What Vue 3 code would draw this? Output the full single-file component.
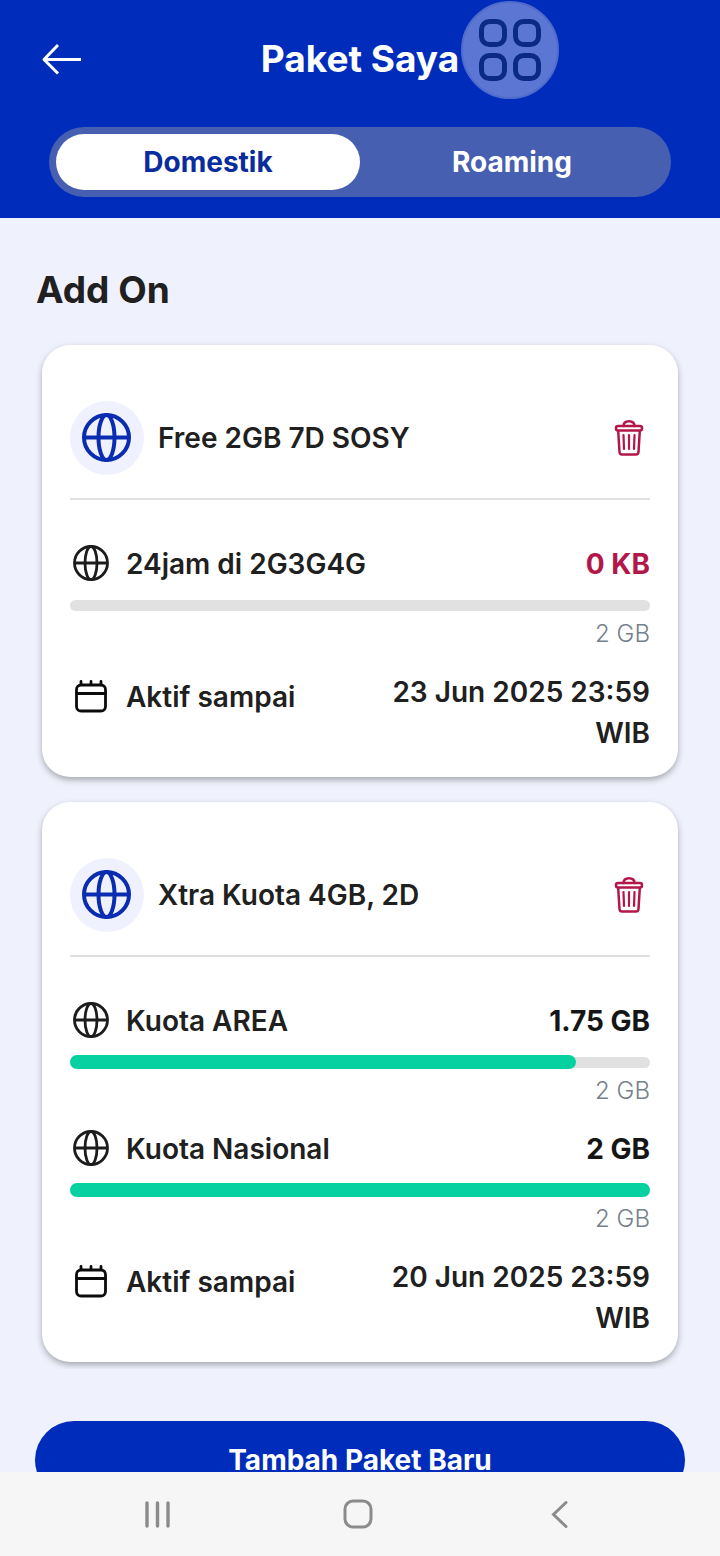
<script setup>
import { ref } from 'vue'

const tabs = ['Domestik', 'Roaming']
const activeTab = ref('Domestik')

const packages = [
  {
    name: 'Free 2GB 7D SOSY',
    quotas: [{ label: '24jam di 2G3G4G', left: '0 KB', total: '2 GB', percent: 0 }],
    until: '23 Jun 2025 23:59 WIB'
  },
  {
    name: 'Xtra Kuota 4GB, 2D',
    quotas: [
      { label: 'Kuota AREA', left: '1.75 GB', total: '2 GB', percent: 87.3 },
      { label: 'Kuota Nasional', left: '2 GB', total: '2 GB', percent: 100 }
    ],
    until: '20 Jun 2025 23:59 WIB'
  }
]
</script>

<template>
  <div class="app">
    <header class="header">
      <div class="title-bar">
        <button class="plain back" type="button" aria-label="Kembali">
          <svg width="44" height="36" viewBox="0 0 44 36" fill="none" stroke="#fff" stroke-width="3" stroke-linejoin="round">
            <path d="M20 4 6 18.500l14 14M6 18.500h37" />
          </svg>
        </button>
        <h1>Paket Saya</h1>
      </div>
      <nav class="tabs">
        <button
          v-for="tab in tabs"
          :key="tab"
          type="button"
          class="tab"
          :class="{ active: tab === activeTab }"
          :aria-pressed="tab === activeTab"
          @click="activeTab = tab"
        >{{ tab }}</button>
      </nav>
    </header>

    <button class="plain floating" type="button" aria-label="Menu pintasan">
      <svg width="64" height="64" viewBox="0 0 64 64" fill="none" stroke="#0b2a86" stroke-width="5">
        <rect x="3.500" y="3.500" width="23" height="23" rx="8" />
        <rect x="37.500" y="3.500" width="23" height="23" rx="8" />
        <rect x="3.500" y="37.500" width="23" height="23" rx="8" />
        <rect x="37.500" y="37.500" width="23" height="23" rx="8" />
      </svg>
    </button>

    <main class="content">
      <h2>Add On</h2>
      <div class="list">
        <article v-for="item in packages" :key="item.name" class="card">
          <div class="card-head">
            <span class="badge">
              <svg width="50" height="50" viewBox="0 0 50 50" fill="none" stroke="#0a2cb0" stroke-width="4">
                <circle cx="24.500" cy="24.500" r="22.500" />
                <ellipse cx="24.500" cy="24.500" rx="8" ry="22.500" />
                <path d="M2 24.500h45" />
              </svg>
            </span>
            <h3>{{ item.name }}</h3>
            <button class="plain trash" type="button" :aria-label="'Hapus ' + item.name">
              <svg width="30" height="38" viewBox="0 0 30 38" fill="none" stroke="#b3174a" stroke-width="2.500" stroke-linecap="round" stroke-linejoin="round">
                <path d="M9.500 7c0-3 2.200-4.800 5.500-4.800s5.500 1.800 5.500 4.800" />
                <rect x="2" y="7" width="26" height="4.500" rx="2" />
                <path d="M4.200 12l1.300 21c.1 1.800 1 2.500 2.500 2.500h14c1.500 0 2.400-.7 2.500-2.500l1.300-21" />
                <path d="M9.500 16l.5 14M15 16v14M20.500 16l-.5 14" stroke-width="2.200" />
              </svg>
            </button>
          </div>

          <section v-for="quota in item.quotas" :key="quota.label" class="quota">
            <div class="row">
              <svg class="icon" width="42" height="40" viewBox="0 0 42 40" fill="none" stroke="#1c1c1c" stroke-width="2.800">
                <circle cx="21" cy="19" r="16.500" />
                <ellipse cx="21" cy="19" rx="6" ry="16.500" />
                <path d="M4.500 19h33" />
              </svg>
              <span class="label">{{ quota.label }}</span>
              <strong class="left" :class="{ empty: quota.percent === 0 }">{{ quota.left }}</strong>
            </div>
            <div class="meter" role="progressbar" :aria-label="quota.label" :aria-valuenow="quota.percent">
              <div class="fill" :style="{ width: quota.percent + '%' }"></div>
            </div>
            <p class="total">{{ quota.total }}</p>
          </section>

          <div class="expiry">
            <div class="row expiry-label">
              <svg class="icon" width="42" height="40" viewBox="0 0 42 40" fill="none" stroke="#0c0c0c" stroke-width="2.800" stroke-linecap="round">
                <rect x="6.500" y="8" width="29" height="26" rx="4.500" />
                <path d="M6.500 16.500h29M11 4.500v3M21 4.500v3M31 4.500v3" />
              </svg>
              <span class="label">Aktif sampai</span>
            </div>
            <time class="date">{{ item.until }}</time>
          </div>
        </article>
      </div>
      <button class="cta" type="button">Tambah Paket Baru</button>
    </main>

    <footer class="system-nav">
      <button class="plain" type="button" aria-label="Aplikasi terbaru">
        <svg width="30" height="30" viewBox="0 0 30 30" stroke="#8b8b8b" stroke-width="3.400" stroke-linecap="round">
          <path d="M5 4v23M15.500 4v23M26 4v23" />
        </svg>
      </button>
      <button class="plain" type="button" aria-label="Beranda">
        <svg width="30" height="30" viewBox="0 0 30 30" fill="none" stroke="#8b8b8b" stroke-width="3">
          <rect x="2" y="2" width="26" height="26" rx="8" />
        </svg>
      </button>
      <button class="plain" type="button" aria-label="Kembali ke layar sebelumnya">
        <svg width="30" height="30" viewBox="0 0 30 30" fill="none" stroke="#8b8b8b" stroke-width="3" stroke-linecap="round">
          <path d="M21 3.500 8.500 15.500 21 27.500" />
        </svg>
      </button>
    </footer>
  </div>
</template>

<style>
body {
  background: #eff2fc;
}
</style>

<style scoped>
.app {
  position: relative;
  display: flex;
  flex-direction: column;
  height: 100vh;
  overflow: hidden;
  background: #eff2fc;
  color: #202020;
  font-family: Inter, "Liberation Sans", sans-serif;
  font-size: 28px;
  font-weight: 600;
}
h1, h2, h3, p {
  margin: 0;
}
button {
  font: inherit;
  border: 0;
  cursor: pointer;
}
svg {
  display: block;
  flex: none;
}
.plain {
  padding: 0;
  background: none;
}
.header {
  flex: none;
  padding: 35px 49px 21px;
  background: #002cbb;
  color: #fff;
}
.title-bar {
  display: grid;
  grid-template-columns: 44px 1fr 44px;
  align-items: center;
  height: 48px;
  margin: 0 -11px 44px;
}
h1 {
  font-size: 37px;
  line-height: 48px;
  font-weight: 700;
  text-align: center;
}
.tabs {
  display: flex;
  padding: 7px;
  border-radius: 35px;
  background: #465fb0;
}
.tab {
  flex: 1;
  height: 56px;
  padding: 0;
  border-radius: 28px;
  background: none;
  color: #fff;
  font-weight: 700;
}
.tab.active {
  background: #fff;
  color: #0a2c9c;
}
.floating {
  position: absolute;
  top: 1px;
  left: 461px;
  display: grid;
  place-items: center;
  width: 98px;
  height: 98px;
  border: 2px solid #4f6ccc;
  border-radius: 50%;
  background: #5c77d3;
}
.content {
  flex: 1;
  min-height: 0;
  overflow-y: auto;
  scrollbar-width: none;
  padding: 48px 35px 24px;
}
h2 {
  padding-left: 1px;
  font-size: 37px;
  line-height: 48px;
  font-weight: 700;
}
.list {
  display: flex;
  flex-direction: column;
  gap: 25px;
  padding: 31px 7px 7px;
  overflow: hidden;
}
.card {
  padding: 56px 28px 23px;
  border-radius: 28px;
  background: #fff;
  box-shadow: 0 3px 6px rgba(0, 0, 0, 0.3);
}
.card-head {
  display: flex;
  align-items: center;
  gap: 14px;
  margin-bottom: 44px;
  padding-bottom: 23px;
  border-bottom: 2px solid #e0e0e0;
}
.badge {
  display: grid;
  place-items: center;
  width: 74px;
  height: 74px;
  border-radius: 50%;
  background: #eff2fe;
}
h3 {
  flex: 1;
  font-size: 28px;
  line-height: 40px;
  font-weight: 600;
}
.trash {
  margin-right: 6px;
}
.quota {
  margin-bottom: 22px;
}
.row {
  display: flex;
  align-items: center;
  gap: 14px;
  min-height: 40px;
}
.label {
  flex: 1;
  line-height: 40px;
  white-space: nowrap;
}
.left {
  color: #151515;
  line-height: 40px;
  font-weight: 700;
}
.left.empty {
  color: #b3174a;
}
.meter {
  position: relative;
  display: flex;
  align-items: center;
  height: 14px;
  margin: 14px 0 6px;
}
.meter::before {
  content: "";
  position: absolute;
  inset: 2px 0 1px;
  border-radius: 6px;
  background: #e1e1e1;
}
.fill {
  position: relative;
  height: 14px;
  border-radius: 7px;
  background: #08d1a1;
}
.total {
  color: #76808c;
  font-size: 24px;
  line-height: 32px;
  font-weight: 300;
  text-align: right;
}
.expiry {
  display: flex;
  justify-content: space-between;
}
.expiry-label {
  height: 50px;
}
.date {
  width: 48%;
  line-height: 41px;
  text-align: right;
}
.cta {
  display: block;
  width: 100%;
  height: 78px;
  margin-top: 52px;
  padding: 0;
  border-radius: 39px;
  background: #002cbb;
  color: #fff;
  line-height: 22px;
  font-weight: 700;
}
.system-nav {
  display: flex;
  flex: none;
  align-items: center;
  justify-content: space-around;
  height: 84px;
  padding: 0 59px 0 56px;
  background: #f6f6f6;
}
</style>
